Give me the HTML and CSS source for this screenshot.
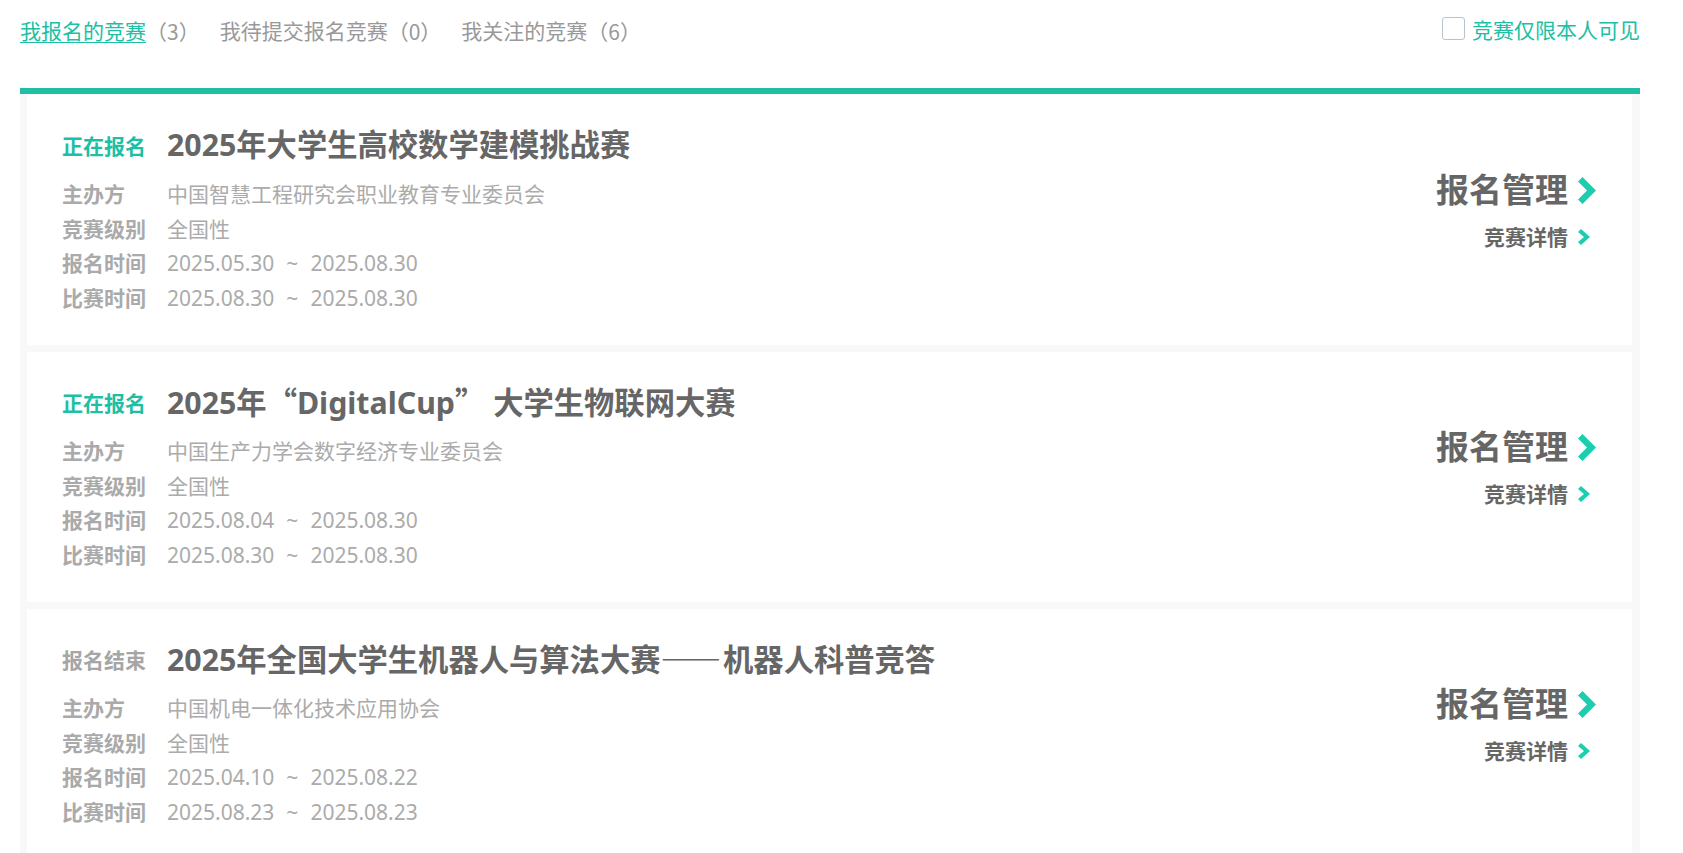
FILE: index.html
```html
<!DOCTYPE html>
<html lang="zh-CN">
<head>
<meta charset="utf-8">
<title>我报名的竞赛</title>
<link rel="stylesheet" href="styles.css">
</head>
<body>
<div class="page">
  <header class="topbar">
    <nav class="tabs">
      <a class="tab active"><span class="tab-name">我报名的竞赛</span><span class="count">（3）</span></a>
      <a class="tab"><span class="tab-name">我待提交报名竞赛</span><span class="count">（0）</span></a>
      <a class="tab"><span class="tab-name">我关注的竞赛</span><span class="count">（6）</span></a>
    </nav>
    <label class="privacy"><span class="box"></span><span class="privacy-text">竞赛仅限本人可见</span></label>
  </header>

  <section class="list">
    <article class="card">
      <div class="info">
        <span class="status open">正在报名</span>
        <h2 class="title">2025年大学生高校数学建模挑战赛</h2>
        <span class="label">主办方</span><span class="value">中国智慧工程研究会职业教育专业委员会</span>
        <span class="label">竞赛级别</span><span class="value">全国性</span>
        <span class="label">报名时间</span><span class="value">2025.05.30<span class="sep">~</span>2025.08.30</span>
        <span class="label">比赛时间</span><span class="value">2025.08.30<span class="sep">~</span>2025.08.30</span>
      </div>
      <div class="actions">
        <a class="manage">报名管理<span class="ico big"><svg width="18" height="27" viewBox="0 0 18 27"><polygon points="0,4.5 4.5,0 18,13.5 4.5,27 0,22.5 9,13.5"/></svg></span></a>
        <a class="detail">竞赛详情<span class="ico small"><svg width="12" height="16" viewBox="0 0 12 16"><polygon points="0,3 3,0 12,8 3,16 0,13 6,8"/></svg></span></a>
      </div>
    </article>

    <article class="card">
      <div class="info">
        <span class="status open">正在报名</span>
        <h2 class="title">2025年<span class="q ql">“</span>DigitalCup<span class="q qr">”</span> 大学生物联网大赛</h2>
        <span class="label">主办方</span><span class="value">中国生产力学会数字经济专业委员会</span>
        <span class="label">竞赛级别</span><span class="value">全国性</span>
        <span class="label">报名时间</span><span class="value">2025.08.04<span class="sep">~</span>2025.08.30</span>
        <span class="label">比赛时间</span><span class="value">2025.08.30<span class="sep">~</span>2025.08.30</span>
      </div>
      <div class="actions">
        <a class="manage">报名管理<span class="ico big"><svg width="18" height="27" viewBox="0 0 18 27"><polygon points="0,4.5 4.5,0 18,13.5 4.5,27 0,22.5 9,13.5"/></svg></span></a>
        <a class="detail">竞赛详情<span class="ico small"><svg width="12" height="16" viewBox="0 0 12 16"><polygon points="0,3 3,0 12,8 3,16 0,13 6,8"/></svg></span></a>
      </div>
    </article>

    <article class="card">
      <div class="info">
        <span class="status closed">报名结束</span>
        <h2 class="title">2025年全国大学生机器人与算法大赛<span class="dash">——</span>机器人科普竞答</h2>
        <span class="label">主办方</span><span class="value">中国机电一体化技术应用协会</span>
        <span class="label">竞赛级别</span><span class="value">全国性</span>
        <span class="label">报名时间</span><span class="value">2025.04.10<span class="sep">~</span>2025.08.22</span>
        <span class="label">比赛时间</span><span class="value">2025.08.23<span class="sep">~</span>2025.08.23</span>
      </div>
      <div class="actions">
        <a class="manage">报名管理<span class="ico big"><svg width="18" height="27" viewBox="0 0 18 27"><polygon points="0,4.5 4.5,0 18,13.5 4.5,27 0,22.5 9,13.5"/></svg></span></a>
        <a class="detail">竞赛详情<span class="ico small"><svg width="12" height="16" viewBox="0 0 12 16"><polygon points="0,3 3,0 12,8 3,16 0,13 6,8"/></svg></span></a>
      </div>
    </article>
  </section>
</div>
</body>
</html>
```
FILE: styles.css
```css
* { box-sizing: border-box; }

html, body {
  margin: 0;
  padding: 0;
  background: #ffffff;
}

body {
  font-family: "Noto Sans", "Noto Sans CJK SC", sans-serif;
  color: #999999;
}

.page {
  padding: 0 43px 0 20px;
}

/* ---------- top bar ---------- */
.topbar {
  height: 88px;
  display: flex;
  justify-content: space-between;
  align-items: flex-start;
}

.tabs {
  display: flex;
  gap: 20px;
  padding-top: 16px;
}

.tab {
  display: flex;
  font-size: 21px;
  line-height: 30px;
  color: #999999;
  cursor: pointer;
}

.tab.active .tab-name {
  color: #20bfa5;
  text-decoration: underline;
  text-underline-offset: 3px;
  text-decoration-thickness: 1px;
}

.count {
  font-family: "Noto Sans CJK SC", sans-serif;
}

.privacy {
  display: flex;
  align-items: center;
  gap: 7px;
  padding-top: 15px;
  color: #20bfa5;
  font-size: 21px;
  line-height: 26px;
}

.box {
  width: 23px;
  height: 23px;
  border: 1px solid #b8c2cc;
  border-radius: 3px;
  background: #ffffff;
  margin-top: -2px;
}

.privacy-text {
  margin-top: 2px;
}

/* ---------- list ---------- */
.list {
  border-top: 6px solid #20bfa5;
  background: #f8f8f8;
  padding: 1px 8px 0 7px;
  display: flex;
  flex-direction: column;
  gap: 7px;
}

.card {
  background: #ffffff;
  display: flex;
  justify-content: space-between;
  padding: 31px 36px 30px 35px;
}

.info {
  display: grid;
  grid-template-columns: 105px auto;
  grid-template-rows: 51px;
  grid-auto-rows: 34.5px;
  align-items: center;
}

.status {
  font-size: 21px;
  font-weight: 700;
  line-height: 41px;
}

.status.open { color: #20bfa5; }
.status.closed { color: #a6a6a6; }

.title {
  margin: 0;
  font-size: 30.3px;
  font-weight: 700;
  line-height: 37px;
  color: #666666;
  white-space: nowrap;
}

.info .status,
.info .title {
  align-self: start;
  height: 41px;
}

.q {
  display: inline-block;
  width: 1em;
  font-family: "Noto Sans CJK SC", sans-serif;
}
.ql { text-align: right; }
.qr { text-align: left; }

.dash {
  font-family: "Noto Sans CJK SC", sans-serif;
  letter-spacing: 2px;
}

.label {
  font-size: 21px;
  font-weight: 700;
  color: #aaaaaa;
  line-height: 34.5px;
}

.value {
  font-size: 21px;
  color: #ababab;
  line-height: 34.5px;
  white-space: nowrap;
}

.sep {
  margin: 0 12px;
}

/* ---------- actions ---------- */
.actions {
  display: flex;
  flex-direction: column;
  align-items: flex-end;
  padding-top: 44px;
}

.manage,
.detail {
  display: flex;
  align-items: center;
  color: #666666;
  font-weight: 700;
  cursor: pointer;
}

.manage {
  font-size: 33px;
  line-height: 40px;
}

.detail {
  font-size: 21px;
  line-height: 28px;
  margin-top: 13px;
}

.ico {
  width: 18px;
  margin-left: 10px;
  display: flex;
  align-items: center;
}

.ico svg {
  display: block;
  fill: #19cfae;
}
```
